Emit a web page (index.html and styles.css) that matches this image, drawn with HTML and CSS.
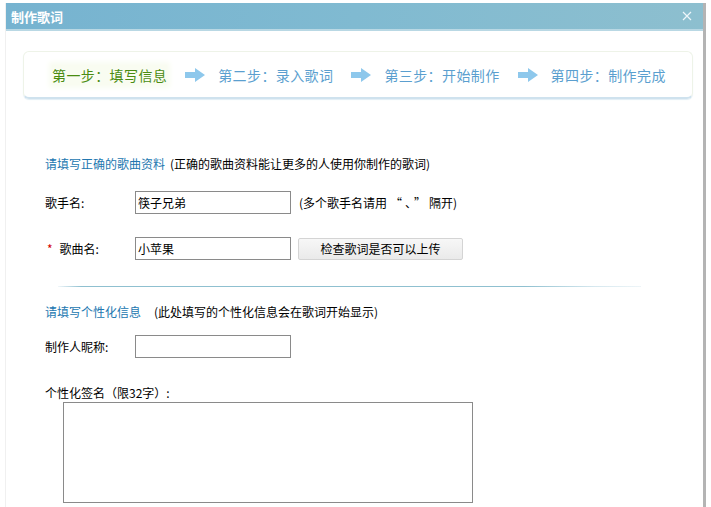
FILE: index.html
```html
<!DOCTYPE html>
<html lang="zh-CN">
<head>
<meta charset="utf-8">
<title>制作歌词</title>
<link rel="stylesheet" href="styles.css">
</head>
<body>
<div class="window">
  <div class="titlebar">
    <span class="title">制作歌词</span>
    <svg class="close" width="10" height="10" viewBox="0 0 10 10"><path d="M1 1L9 9M9 1L1 9" stroke="#eef6fa" stroke-width="1.2" fill="none"/></svg>
  </div>
  <div class="body">
    <div class="steps">
      <span class="step active">第一步：填写信息</span>
      <svg class="arrow" width="20" height="14" viewBox="0 0 20 14"><path d="M0 4h10V0l10 7-10 7v-4H0z" fill="#8ec8ec"/></svg>
      <span class="step">第二步：录入歌词</span>
      <svg class="arrow" width="20" height="14" viewBox="0 0 20 14"><path d="M0 4h10V0l10 7-10 7v-4H0z" fill="#8ec8ec"/></svg>
      <span class="step">第三步：开始制作</span>
      <svg class="arrow" width="20" height="14" viewBox="0 0 20 14"><path d="M0 4h10V0l10 7-10 7v-4H0z" fill="#8ec8ec"/></svg>
      <span class="step">第四步：制作完成</span>
    </div>

    <div class="form">
      <div class="section-title first"><span class="blue">请填写正确的歌曲资料</span><span class="note">(正确的歌曲资料能让更多的人使用你制作的歌词)</span></div>
      <div class="row r1">
        <label class="label">歌手名:</label>
        <div class="input">筷子兄弟</div>
        <span class="hint">(多个歌手名请用<span class="fw">“、”</span>隔开)</span>
      </div>
      <div class="row r2">
        <label class="label"><span class="star">*</span>歌曲名:</label>
        <div class="input">小苹果</div>
        <div class="button">检查歌词是否可以上传</div>
      </div>
    </div>
    <div class="separator"></div>
    <div class="form">
      <div class="section-title second"><span class="blue">请填写个性化信息</span><span class="note wide">(此处填写的个性化信息会在歌词开始显示)</span></div>
      <div class="row r3">
        <label class="label">制作人昵称:</label>
        <div class="input"></div>
      </div>
      <div class="sign-label">个性化签名（限32字）:</div>
      <div class="textarea"></div>
    </div>
  </div>
</div>
</body>
</html>
```

FILE: styles.css
```css
html, body {
  margin: 0;
  padding: 0;
  background: #ffffff;
}
body {
  font-family: "Noto Sans CJK SC", "DejaVu Sans", sans-serif;
  font-size: 12px;
  color: #000;
}
.window {
  margin: 3px 0 0 5px;
  width: 701px;
  height: 504px;
  border-right: 3px solid #b4b4b4;
  border-left: 1px solid #f0f0f0;
  box-sizing: border-box;
}
.titlebar {
  height: 26px;
  background: linear-gradient(90deg, #76b3d0 0%, #80bad1 50%, #8dbfcf 100%);
  border-bottom: 2px solid #b9d8e4;
  display: flex;
  align-items: center;
  justify-content: space-between;
  padding: 0 11px 0 5px;
}
.title {
  color: #fff;
  font-weight: bold;
  font-size: 13px;
}
.close {
  display: block;
}
.steps {
  margin: 20px 10px 0 17px;
  height: 48px;
  box-sizing: border-box;
  border: 1px solid #eef3e8;
  border-bottom: 2px solid #cfe2ee;
  border-radius: 6px;
  box-shadow: 0 1px 1px #e2eef5;
  display: flex;
  align-items: center;
  padding-left: 28px;
}
.step {
  font-size: 14px;
  color: #5b9fcf;
  white-space: nowrap;
  letter-spacing: 0.4px;
}
.step.active {
  color: #4a8c12;
  background: #f9fcf1;
  box-shadow: 0 0 5px 3px #f9fcf1;
}
.arrow {
  margin: 0 13px 0 18px;
  flex: none;
}
.form {
  padding-left: 39px;
}
.section-title {
  line-height: 16px;
  height: 16px;
  white-space: nowrap;
}
.section-title.first { margin-top: 57px; }
.section-title.second { margin-top: 17px; }
.blue { color: #2277b0; }
.note { margin-left: 5px; }
.note.wide { margin-left: 13px; }
.fw { letter-spacing: 3px; margin-left: 3px; }
.row {
  display: flex;
  align-items: center;
  height: 23px;
}
.row.r1 { margin-top: 19px; }
.row.r2 { margin-top: 23px; }
.row.r3 { margin-top: 15px; }
.label {
  width: 90px;
  flex: none;
  display: flex;
  align-items: center;
}
.star {
  color: #d40000;
  margin: 0 7px 0 2px;
}
.input {
  width: 156px;
  height: 23px;
  box-sizing: border-box;
  border: 1px solid #8a8a8a;
  padding: 2px;
  line-height: 17px;
  background: #fff;
}
.hint {
  margin-left: 8px;
  white-space: nowrap;
}
.button {
  margin-left: 7px;
  width: 165px;
  height: 22px;
  box-sizing: border-box;
  border: 1px solid #d4d4d4;
  border-radius: 2px;
  background: linear-gradient(#f7f7f7, #eaeaea);
  text-align: center;
  line-height: 20px;
}
.separator {
  margin: 26px 0 0 52px;
  width: 583px;
  height: 1px;
  background: linear-gradient(90deg, #f0f6f9 0%, #8fc0d0 4%, #8fc0d0 80%, #d6e8ef 92%, #eef5f8 100%);
}
.sign-label {
  margin-top: 27px;
  line-height: 16px;
  height: 16px;
}
.textarea {
  margin: 1px 0 0 18px;
  width: 410px;
  height: 101px;
  box-sizing: border-box;
  border: 1px solid #8a8a8a;
}
```
